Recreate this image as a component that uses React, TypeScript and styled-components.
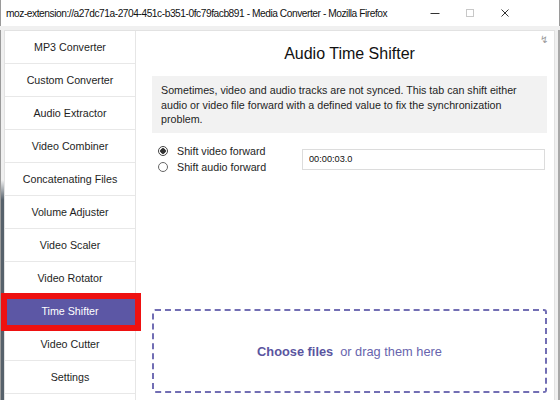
import React, {useState} from 'react';
import styled, {createGlobalStyle} from 'styled-components';

const tabs = [
    'MP3 Converter',
    'Custom Converter',
    'Audio Extractor',
    'Video Combiner',
    'Concatenating Files',
    'Volume Adjuster',
    'Video Scaler',
    'Video Rotator',
    'Time Shifter',
    'Video Cutter',
    'Settings',
];

export default function App() {

    const [active, setActive] = useState<string>('Time Shifter');
    const [mode, setMode] = useState<'video' | 'audio'>('video');
    const [offset, setOffset] = useState<string>('00:00:03.0');

    return (
        <Window>
            <GlobalStyle/>
            <TitleBar>
                <TitleText>moz-extension://a27dc71a-2704-451c-b351-0fc79facb891 - Media Converter - Mozilla Firefox</TitleText>
                <Controls>
                    <ControlButton>
                        <svg width="10" height="10" viewBox="0 0 10 10">
                            <path d="M0.5 5.5h9" stroke="#333" strokeWidth="1"/>
                        </svg>
                    </ControlButton>
                    <ControlButton>
                        <svg width="10" height="10" viewBox="0 0 10 10">
                            <rect x="1.5" y="1.5" width="7" height="7" fill="none" stroke="#c8c8c8" strokeWidth="1"/>
                        </svg>
                    </ControlButton>
                    <ControlButton>
                        <svg width="10" height="10" viewBox="0 0 10 10">
                            <path d="M1.5 1.5l7 7M8.5 1.5l-7 7" stroke="#333" strokeWidth="1"/>
                        </svg>
                    </ControlButton>
                </Controls>
            </TitleBar>
            <Band/>
            <Content>
                <LeftGutter/>
                <Page>
                    <Sidebar>
                        {tabs.map((t) => (
                            <Tab key={t} $active={t === active} onClick={() => setActive(t)}>
                                {t}
                                {t === active && <Highlight/>}
                            </Tab>
                        ))}
                    </Sidebar>
                    <Main>
                        <CornerIcon>↯</CornerIcon>
                        <Title>Audio Time Shifter</Title>
                        <Info>
                            Sometimes, video and audio tracks are not synced. This tab can shift either
                            audio or video file forward with a defined value to fix the synchronization
                            problem.
                        </Info>
                        <Options>
                            <RadioGroup>
                                <RadioRow onClick={() => setMode('video')}>
                                    <Radio $checked={mode === 'video'}/>
                                    Shift video forward
                                </RadioRow>
                                <RadioRow onClick={() => setMode('audio')}>
                                    <Radio $checked={mode === 'audio'}/>
                                    Shift audio forward
                                </RadioRow>
                            </RadioGroup>
                            <TimeInput value={offset} onChange={(e) => setOffset(e.target.value)}/>
                        </Options>
                        <DropZone>
                            <ChooseLink>Choose files</ChooseLink>
                            <DropHint>or drag them here</DropHint>
                        </DropZone>
                    </Main>
                </Page>
                <RightGutter/>
            </Content>
        </Window>
    );

}

const GlobalStyle = createGlobalStyle`
  html, body {
    margin: 0;
    padding: 0;
  }

  body {
    width: 560px;
    height: 400px;
    overflow: hidden;
    font-family: "Liberation Sans", Arial, sans-serif;
  }
`;

const Window = styled.div`
  display: flex;
  flex-direction: column;
  width: 560px;
  height: 400px;
  background: #f0f0f0;
`;

const TitleBar = styled.div`
  display: flex;
  align-items: center;
  flex-shrink: 0;
  height: 26px;
  background: #fff;
  border-left: 1px solid #9a9a9a;
  border-right: 1px solid #9a9a9a;
`;

const TitleText = styled.div`
  flex: 1;
  min-width: 0;
  overflow: hidden;
  padding-left: 5px;
  font-family: "Liberation Sans", Arial, sans-serif;
  font-size: 10.2px;
  letter-spacing: -0.45px;
  color: #111;
  white-space: nowrap;
`;

const Controls = styled.div`
  display: flex;
  flex-shrink: 0;
  margin-right: 37px;
`;

const ControlButton = styled.div`
  display: flex;
  align-items: center;
  justify-content: center;
  width: 35px;
  height: 26px;
`;

const Band = styled.div`
  flex-shrink: 0;
  height: 4px;
  background: #f0f0f0;
`;

const Content = styled.div`
  display: flex;
  flex: 1;
  min-height: 0;
`;

const LeftGutter = styled.div`
  width: 4px;
  background: linear-gradient(to bottom, #f0f0f0 0, #f0f0f0 150px, #56616b 170px);
  border-left: 1px solid #9a9a9a;
  box-sizing: border-box;
`;

const RightGutter = styled.div`
  width: 5px;
  background: #f0f0f0;
  border-right: 2px solid #a8a8a8;
  box-sizing: border-box;
`;

const Page = styled.div`
  display: flex;
  flex: 1;
  background: #fff;
  border: 1px solid #e2e2e2;
  border-bottom: none;
`;

const Sidebar = styled.div`
  display: flex;
  flex-direction: column;
  width: 130px;
  border-right: 1px solid #e6e6e6;
`;

const Tab = styled.div<{ $active: boolean }>`
  position: relative;
  display: flex;
  align-items: center;
  justify-content: center;
  flex-shrink: 0;
  height: 32px;
  border-bottom: 1px solid #e8e8e8;
  font-size: 10.7px;
  color: ${(p) => (p.$active ? '#fff' : '#1e1e1e')};
  background: ${(p) => (p.$active ? '#5c57a5' : '#fff')};
  cursor: pointer;
`;

// red annotation frame drawn over the active tab
const Highlight = styled.span`
  position: absolute;
  left: -4px;
  top: -2px;
  width: 140px;
  height: 38px;
  box-sizing: border-box;
  border: 6px solid #ee1111;
  z-index: 2;
  pointer-events: none;
`;

const Main = styled.div`
  position: relative;
  display: flex;
  flex-direction: column;
  flex: 1;
  padding: 0 7px 7px 16px;
`;

const CornerIcon = styled.span`
  position: absolute;
  top: 3px;
  right: 6px;
  font-size: 10px;
  color: #9a9a9a;
`;

const Title = styled.div`
  margin-top: 13px;
  text-align: center;
  font-size: 16px;
  line-height: 20px;
  color: #111;
`;

const Info = styled.div`
  margin-top: 12px;
  padding: 7px 9px 6px 9px;
  background: #f2f2f2;
  font-size: 10.7px;
  line-height: 14.5px;
  color: #1e1e1e;
`;

const Options = styled.div`
  display: flex;
  align-items: center;
  margin-top: 10px;
`;

const RadioGroup = styled.div`
  display: flex;
  flex-direction: column;
  width: 144px;
  padding-left: 6px;
`;

const RadioRow = styled.div`
  display: flex;
  align-items: center;
  height: 16px;
  font-size: 10.7px;
  color: #1e1e1e;
  cursor: pointer;
`;

const Radio = styled.span<{ $checked: boolean }>`
  display: inline-block;
  box-sizing: border-box;
  width: 10px;
  height: 10px;
  margin-right: 9px;
  border-radius: 50%;
  border: 1px solid ${(p) => (p.$checked ? '#444' : '#666')};
  background: ${(p) => (p.$checked ? 'radial-gradient(circle, #333 0, #333 2.5px, #fff 3px)' : '#fff')};
`;

const TimeInput = styled.input`
  flex: 1;
  height: 21px;
  box-sizing: border-box;
  margin: 1px 2px 0 0;
  padding: 0 6px;
  border: 1px solid #dcdcdc;
  outline: none;
  font-family: "Liberation Sans", Arial, sans-serif;
  font-size: 9.2px;
  color: #111;
`;

const DropZone = styled.div`
  display: flex;
  align-items: center;
  justify-content: center;
  margin-top: auto;
  height: 84px;
  box-sizing: border-box;
  border: 2px dashed #726eb4;
  border-radius: 3px;
  font-size: 12.8px;
`;

const ChooseLink = styled.span`
  font-weight: 700;
  color: #5a55a0;
  cursor: pointer;
`;

const DropHint = styled.span`
  margin-left: 7px;
  color: #6864ad;
`;
